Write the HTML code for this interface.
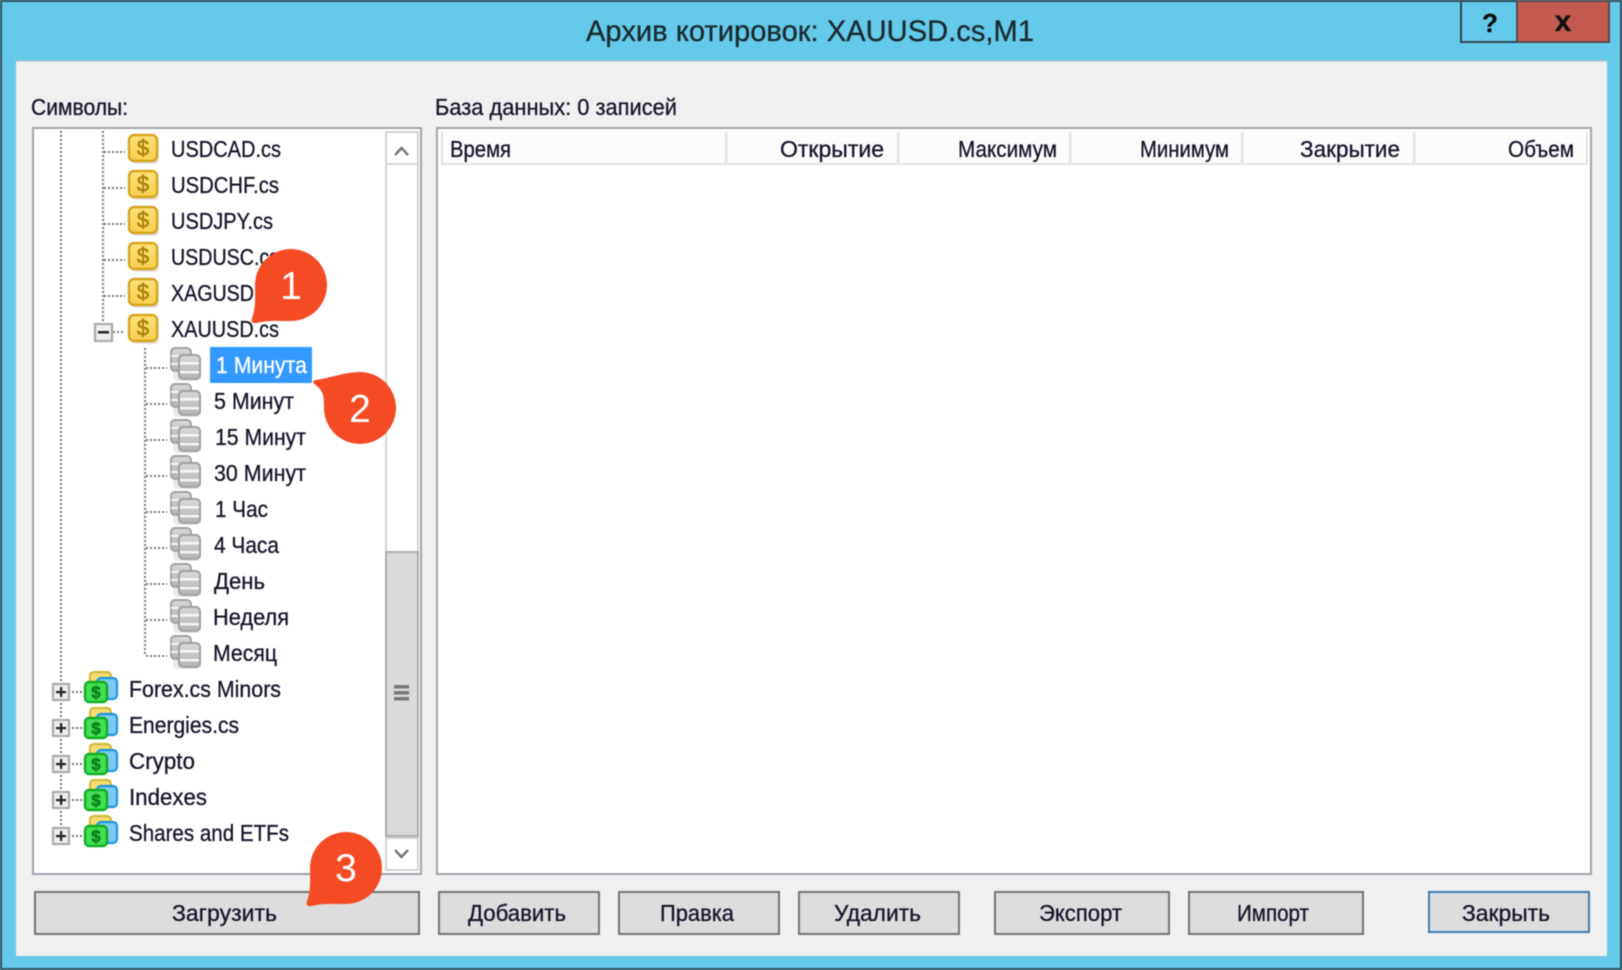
<!DOCTYPE html>
<html><head><meta charset="utf-8">
<style>
html,body{margin:0;padding:0;background:#65c9ea;}
svg{display:block;width:1622px;height:970px;filter:blur(.45px)}
text{font-family:"Liberation Sans",sans-serif;font-size:23px;fill:#14142a;stroke:#14142a;stroke-width:.3px}
</style></head><body>
<svg xmlns="http://www.w3.org/2000/svg" width="1622" height="970" viewBox="0 0 1622 970">
<defs>
<linearGradient id="gy" x1="0" y1="0" x2="0" y2="1"><stop offset="0" stop-color="#fde27a"/><stop offset="1" stop-color="#f8cf4c"/></linearGradient>
<linearGradient id="gg" x1="0" y1="0" x2="0" y2="1"><stop offset="0" stop-color="#d8d8d8"/><stop offset="1" stop-color="#b4b4b4"/></linearGradient>
<g id="usd">
<rect x="2" y="2" width="28" height="27" rx="5" fill="#d6d6d0" opacity=".7"/>
<rect x="0" y="0" width="28" height="26" rx="5" fill="url(#gy)" stroke="#d6a520" stroke-width="2.400"/>
<text x="14" y="20.500" text-anchor="middle" style="font-size:22px;fill:#a9820f;stroke:#a9820f;stroke-width:.6px">$</text>
</g>
<g id="db">
<rect x="3" y="10" width="28" height="24" rx="4" fill="#dcdcdc" opacity=".6"/>
<rect x="1" y="1" width="20" height="23" rx="4" fill="url(#gg)" stroke="#a2a2a2" stroke-width="2"/>
<rect x="1" y="8" width="8" height="2" fill="#f4f4f4"/><rect x="1" y="16" width="8" height="2" fill="#f4f4f4"/>
<rect x="9" y="8" width="21" height="24" rx="4" fill="url(#gg)" stroke="#a0a0a0" stroke-width="2"/>
<rect x="10" y="15" width="19" height="2.400" fill="#f7f7f7"/><rect x="10" y="24" width="19" height="2.400" fill="#f7f7f7"/>
</g>
<g id="fold">
<rect x="6" y="1" width="21" height="20" rx="4" fill="#f3de72" stroke="#d6b93c" stroke-width="2.200"/>
<rect x="13" y="7" width="20" height="21" rx="4" fill="#7cc9f6" stroke="#1f95dd" stroke-width="2.200"/>
<rect x="1" y="11" width="22" height="20" rx="4" fill="#45dd52" stroke="#0fae22" stroke-width="2.400"/>
<text x="12" y="27" text-anchor="middle" style="font-size:17px;fill:#07861a;stroke:#07861a;stroke-width:.6px;font-weight:700">$</text>
</g>
<g id="plus">
<rect x="1" y="1" width="16" height="16" fill="#eeeeee" stroke="#aaaaaa" stroke-width="2.200"/>
<rect x="4" y="8" width="10" height="2.200" fill="#222"/><rect x="8" y="4" width="2.200" height="10" fill="#222"/>
</g>
</defs>

<rect width="1622" height="970" fill="#65c9ea"/>
<rect x="0" y="0" width="1622" height="2" fill="#33525e"/>
<rect x="0" y="0" width="2" height="970" fill="#33525e"/>
<rect x="0" y="968" width="1622" height="2" fill="#33525e"/>
<rect x="1620" y="0" width="2" height="970" fill="#33525e"/>

<rect x="1461" y="1" width="57" height="41" fill="#65c9ea" stroke="#2c4753" stroke-width="2"/>
<rect x="1517" y="1" width="92" height="41" fill="#c55b50" stroke="#5a4a4a" stroke-width="2"/>
<text x="1490" y="32" text-anchor="middle" style="font-size:26px;font-weight:700;fill:#0b0b0b;stroke:#0b0b0b">?</text>
<text x="1563" y="31" text-anchor="middle" style="font-size:30px;font-weight:700;fill:#111;stroke:#111">x</text>

<text x="586" y="41" textLength="448" lengthAdjust="spacingAndGlyphs" style="font-size:30px;fill:#182a2e;stroke:#182a2e">Архив котировок: XAUUSD.cs,M1</text>

<rect x="16" y="60" width="1591" height="896" fill="#f0f0f0"/>
<rect x="16" y="60" width="1591" height="1.500" fill="#9fc2cf"/>

<text x="31" y="115" textLength="97" lengthAdjust="spacingAndGlyphs">Символы:</text>
<text x="435" y="115" textLength="242" lengthAdjust="spacingAndGlyphs">База данных: 0 записей</text>

<!-- tree box -->
<rect x="33" y="128" width="388" height="746" fill="#fff" stroke="#a0a5ac" stroke-width="2"/>
<!-- scrollbar -->
<rect x="386" y="132" width="32" height="738" fill="#fff" stroke="#d2d2d2" stroke-width="2"/>
<rect x="386" y="132" width="32" height="32" fill="#fff" stroke="#d2d2d2" stroke-width="2"/>
<path d="M395 155L401.500 148L408 155" fill="none" stroke="#757575" stroke-width="2.500"/>
<rect x="386" y="552" width="32" height="284" fill="#dadada" stroke="#aeaeae" stroke-width="2"/>
<rect x="394" y="685" width="15" height="3.500" fill="#777"/>
<rect x="394" y="691" width="15" height="3.500" fill="#777"/>
<rect x="394" y="697" width="15" height="3.500" fill="#777"/>
<rect x="386" y="838" width="32" height="32" fill="#fff" stroke="#d2d2d2" stroke-width="2"/>
<path d="M395 850L401.500 857L408 850" fill="none" stroke="#757575" stroke-width="2.500"/>

<!-- dotted lines -->
<g stroke="#777" stroke-width="2" stroke-dasharray="2 2" fill="none">
<path d="M61 131V830"/>
<path d="M103 131V324"/>
<path d="M145 348V656"/>
<path d="M104 152H125M104 188H125M104 224H125M104 260H125M104 296H125M113 332H125"/>
<path d="M146 368H167M146 404H167M146 440H167M146 476H167M146 512H167M146 548H167M146 584H167M146 620H167M146 656H167"/>
<path d="M72 692H83M72 728H83M72 764H83M72 800H83M72 836H83"/>
</g>

<use href="#usd" x="129" y="135"/>
<use href="#usd" x="129" y="171"/>
<use href="#usd" x="129" y="207"/>
<use href="#usd" x="129" y="243"/>
<use href="#usd" x="129" y="279"/>
<use href="#usd" x="129" y="315"/>

<g>
<rect x="95" y="324" width="17" height="17" fill="#eee" stroke="#aaa" stroke-width="2.200"/>
<rect x="98" y="331" width="11" height="2.500" fill="#222"/>
</g>

<use href="#db" x="170" y="347"/>
<use href="#db" x="170" y="383"/>
<use href="#db" x="170" y="419"/>
<use href="#db" x="170" y="455"/>
<use href="#db" x="170" y="491"/>
<use href="#db" x="170" y="527"/>
<use href="#db" x="170" y="563"/>
<use href="#db" x="170" y="599"/>
<use href="#db" x="170" y="635"/>

<use href="#fold" x="84" y="671"/>
<use href="#fold" x="84" y="707"/>
<use href="#fold" x="84" y="743"/>
<use href="#fold" x="84" y="779"/>
<use href="#fold" x="84" y="815"/>

<use href="#plus" x="52" y="683"/>
<use href="#plus" x="52" y="719"/>
<use href="#plus" x="52" y="755"/>
<use href="#plus" x="52" y="791"/>
<use href="#plus" x="52" y="827"/>

<text x="171" y="157" textLength="110" lengthAdjust="spacingAndGlyphs">USDCAD.cs</text>
<text x="171" y="193" textLength="108" lengthAdjust="spacingAndGlyphs">USDCHF.cs</text>
<text x="171" y="229" textLength="102" lengthAdjust="spacingAndGlyphs">USDJPY.cs</text>
<text x="171" y="265" textLength="108" lengthAdjust="spacingAndGlyphs">USDUSC.cs</text>
<text x="171" y="301" textLength="108" lengthAdjust="spacingAndGlyphs">XAGUSD.cs</text>
<text x="171" y="337" textLength="108" lengthAdjust="spacingAndGlyphs">XAUUSD.cs</text>

<rect x="210" y="347" width="102" height="36" fill="#3399ff"/>
<text x="216" y="373" textLength="91" lengthAdjust="spacingAndGlyphs" style="fill:#fff;stroke:#fff">1 Минута</text>
<text x="214" y="409" textLength="80" lengthAdjust="spacingAndGlyphs">5 Минут</text>
<text x="215" y="445" textLength="91" lengthAdjust="spacingAndGlyphs">15 Минут</text>
<text x="214" y="481" textLength="92" lengthAdjust="spacingAndGlyphs">30 Минут</text>
<text x="215" y="517" textLength="53" lengthAdjust="spacingAndGlyphs">1 Час</text>
<text x="214" y="553" textLength="65" lengthAdjust="spacingAndGlyphs">4 Часа</text>
<text x="214" y="589" textLength="51" lengthAdjust="spacingAndGlyphs">День</text>
<text x="213" y="625" textLength="76" lengthAdjust="spacingAndGlyphs">Неделя</text>
<text x="213" y="661" textLength="64" lengthAdjust="spacingAndGlyphs">Месяц</text>
<text x="129" y="697" textLength="152" lengthAdjust="spacingAndGlyphs">Forex.cs Minors</text>
<text x="129" y="733" textLength="110" lengthAdjust="spacingAndGlyphs">Energies.cs</text>
<text x="129" y="769" textLength="66" lengthAdjust="spacingAndGlyphs">Crypto</text>
<text x="129" y="805" textLength="78" lengthAdjust="spacingAndGlyphs">Indexes</text>
<text x="129" y="841" textLength="160" lengthAdjust="spacingAndGlyphs">Shares and ETFs</text>

<!-- table -->
<rect x="437" y="128" width="1154" height="746" fill="#fff" stroke="#a0a5ac" stroke-width="2"/>
<rect x="441" y="132" width="1146" height="32" fill="#fcfcfc"/>
<rect x="441" y="163" width="1146" height="2" fill="#e3e3e3"/>
<g fill="#e3e3e3">
<rect x="441" y="132" width="2" height="32"/>
<rect x="725" y="132" width="2.500" height="32"/>
<rect x="897" y="132" width="2.500" height="32"/>
<rect x="1069" y="132" width="2.500" height="32"/>
<rect x="1241" y="132" width="2.500" height="32"/>
<rect x="1413" y="132" width="2.500" height="32"/>
<rect x="1586" y="132" width="2" height="32"/>
</g>
<text x="450" y="157" textLength="61" lengthAdjust="spacingAndGlyphs">Время</text>
<text x="780" y="157" textLength="104" lengthAdjust="spacingAndGlyphs">Открытие</text>
<text x="958" y="157" textLength="99" lengthAdjust="spacingAndGlyphs">Максимум</text>
<text x="1140" y="157" textLength="89" lengthAdjust="spacingAndGlyphs">Минимум</text>
<text x="1300" y="157" textLength="100" lengthAdjust="spacingAndGlyphs">Закрытие</text>
<text x="1508" y="157" textLength="66" lengthAdjust="spacingAndGlyphs">Объем</text>

<!-- buttons -->
<g fill="#dddddd" stroke="#747474" stroke-width="2">
<rect x="35" y="892" width="384" height="42"/>
<rect x="439" y="892" width="160" height="42"/>
<rect x="619" y="892" width="160" height="42"/>
<rect x="799" y="892" width="160" height="42"/>
<rect x="995" y="892" width="174" height="42"/>
<rect x="1189" y="892" width="174" height="42"/>
</g>
<rect x="1429" y="892" width="160" height="40" fill="#dddddd" stroke="#3c7fb1" stroke-width="2"/>
<text x="172" y="921" textLength="105" lengthAdjust="spacingAndGlyphs">Загрузить</text>
<text x="468" y="921" textLength="98" lengthAdjust="spacingAndGlyphs">Добавить</text>
<text x="660" y="921" textLength="74" lengthAdjust="spacingAndGlyphs">Правка</text>
<text x="834" y="921" textLength="87" lengthAdjust="spacingAndGlyphs">Удалить</text>
<text x="1039" y="921" textLength="83" lengthAdjust="spacingAndGlyphs">Экспорт</text>
<text x="1237" y="921" textLength="72" lengthAdjust="spacingAndGlyphs">Импорт</text>
<text x="1462" y="921" textLength="88" lengthAdjust="spacingAndGlyphs">Закрыть</text>

<!-- callouts -->
<path fill="#f44b25" d="M291 249A36 36 0 1 1 291 321C279 321 268 320 257 323Q250 324 252 318C256 308 255 296 255 285A36 36 0 0 1 291 249Z"/>
<path fill="#f44b25" d="M360 372A36 36 0 1 1 324 408C324 398 324 392 317 386Q310 381 316 380C330 378 345 372 360 372Z"/>
<path fill="#f44b25" d="M346 832A36 36 0 1 1 346 904C334 904 323 903 312 906Q305 907 307 901C311 891 310 879 310 868A36 36 0 0 1 346 832Z"/>
<text x="291" y="299" text-anchor="middle" style="font-size:39px;fill:#fff;stroke:none">1</text>
<text x="360" y="422" text-anchor="middle" style="font-size:39px;fill:#fff;stroke:none">2</text>
<text x="346" y="881" text-anchor="middle" style="font-size:39px;fill:#fff;stroke:none">3</text>
</svg>
</body></html>
